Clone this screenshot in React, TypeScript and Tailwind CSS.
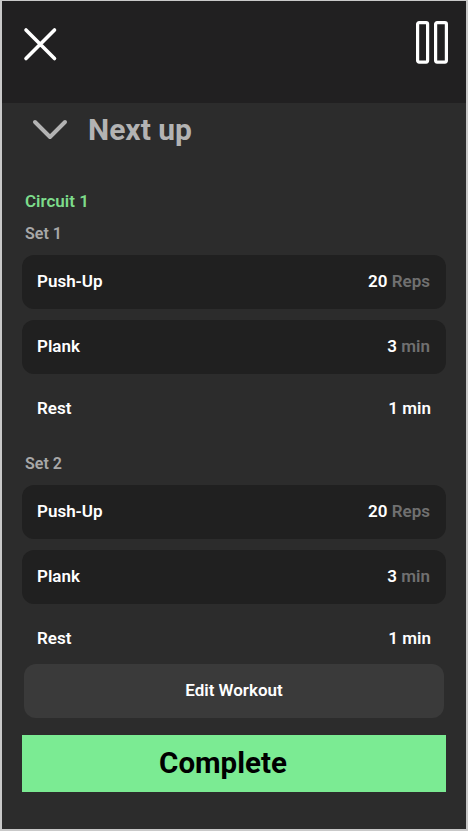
import React from "react";

type Item = { name: string; value: string; unit: string; card: boolean };

const sets: { label: string; items: Item[] }[] = [
  {
    label: "Set 1",
    items: [
      { name: "Push-Up", value: "20", unit: "Reps", card: true },
      { name: "Plank", value: "3", unit: "min", card: true },
      { name: "Rest", value: "1", unit: "min", card: false },
    ],
  },
  {
    label: "Set 2",
    items: [
      { name: "Push-Up", value: "20", unit: "Reps", card: true },
      { name: "Plank", value: "3", unit: "min", card: true },
      { name: "Rest", value: "1", unit: "min", card: false },
    ],
  },
];

function Row({ item }: { item: Item }) {
  if (!item.card) {
    return (
      <div className="mt-[24px] flex h-[22px] items-center justify-between px-[15px] text-[17px] font-semibold text-white">
        <span>{item.name}</span>
        <span>
          {item.value} {item.unit}
        </span>
      </div>
    );
  }
  return (
    <div className="mb-[11px] flex h-[54px] items-center justify-between rounded-[12px] bg-[#202020] pl-[15px] pr-[16px] text-[17px] font-semibold text-white">
      <span>{item.name}</span>
      <span>
        {item.value} <span className="text-[#707070]">{item.unit}</span>
      </span>
    </div>
  );
}

export default function App() {
  return (
    <div
      className="flex h-[831px] w-[468px] flex-col overflow-hidden border-x-2 border-t border-b-2 border-[#c9c9c9] bg-[#2c2c2c]"
      style={{ fontFamily: "Roboto, 'Liberation Sans', sans-serif" }}
    >
      <header className="flex h-[102px] shrink-0 items-start justify-between bg-[#212021] pl-[19px] pr-[16px] pt-[24px]">
        <svg width="38" height="38" viewBox="0 0 38 38" fill="none">
          <path d="M5 5 L33.5 33.5 M33.5 5 L5 33.5" stroke="white" strokeWidth="3.6" strokeLinecap="round" />
        </svg>
        <svg width="34" height="44" viewBox="0 0 34 44" fill="none" className="-mt-[4px]">
          <rect x="1.6" y="1.6" width="10" height="39.5" rx="1.5" stroke="white" strokeWidth="3.2" />
          <rect x="19.6" y="1.6" width="10.8" height="39.5" rx="1.5" stroke="white" strokeWidth="3.2" />
        </svg>
      </header>

      <div className="mt-[11px] flex h-[32px] items-center gap-[20px] pl-[30px]">
        <svg width="36" height="22" viewBox="0 0 36 22" fill="none">
          <path d="M3 3 L18 18 L33 3" stroke="#b3b3b3" strokeWidth="4" strokeLinecap="round" strokeLinejoin="round" />
        </svg>
        <span className="text-[30px] font-bold leading-[32px] text-[#b3b3b3]">Next up</span>
      </div>

      <div className="flex flex-col px-[20px] pt-[45px]">
        <div className="pl-[3px] text-[17px] font-semibold leading-[20px] text-[#7ddc8b]">Circuit 1</div>
        {sets.map((set, i) => (
          <div key={set.label} className={i === 0 ? "mt-[13px]" : "mt-[34px]"}>
            <div className="mb-[11px] pl-[3px] text-[16px] font-semibold leading-[20px] text-[#a8a8a8]">
              {set.label}
            </div>
            {set.items.map((item, j) => (
              <Row key={j} item={item} />
            ))}
          </div>
        ))}

        <button className="mx-[2px] mt-[14px] flex h-[54px] items-center justify-center rounded-[12px] bg-[#3a3a3a] text-[17px] font-semibold text-white">
          Edit Workout
        </button>
        <button className="mt-[17px] flex h-[57px] items-center justify-center bg-[#7beb93] pr-[22px] text-[29.5px] font-bold text-black">
          Complete
        </button>
      </div>
    </div>
  );
}
